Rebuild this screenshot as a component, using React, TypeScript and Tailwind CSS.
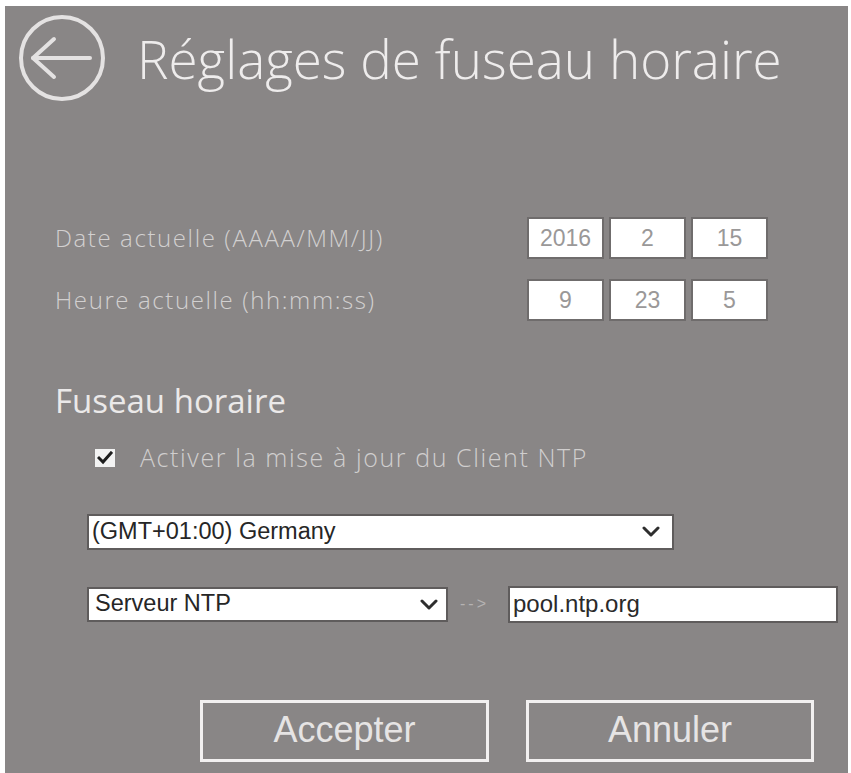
const segoe = "font-['Open_Sans','Noto_Sans',sans-serif]";
const arial = "font-['Liberation_Sans',Arial,sans-serif]";

function BackIcon() {
  return (
    <svg width="90" height="90" viewBox="0 0 90 90" fill="none" stroke="#e4e2e2" strokeWidth="4" strokeLinecap="round" strokeLinejoin="round">
      <circle cx="45" cy="45" r="41" />
      <path d="M16 45 H73" />
      <path d="M37 26 L16 45 L37 64" />
    </svg>
  );
}

function Chevron() {
  return (
    <svg width="18" height="11" viewBox="0 0 18 11" fill="none" stroke="#2e2e2e" strokeWidth="3" strokeLinecap="round" strokeLinejoin="round">
      <path d="M2 2 L9 9 L16 2" />
    </svg>
  );
}

function NumBox({ value }: { value: string }) {
  return (
    <div className={`w-[77px] h-full bg-white border-2 border-[#6f6c6c] flex items-center justify-center text-[23px] text-[#9a9898] ${arial}`}>
      {value}
    </div>
  );
}

function FieldRow({ label, values }: { label: string; values: string[] }) {
  return (
    <div className="flex items-center h-[42px]">
      <div className={`w-[472px] text-[24px] font-light tracking-[1.6px] text-[#d2d0d0] ${segoe}`}>{label}</div>
      <div className="flex gap-[5px] h-full">
        {values.map((v, i) => (
          <NumBox key={i} value={v} />
        ))}
      </div>
    </div>
  );
}

export default function App() {
  return (
    <div className="w-[851px] h-[773px] bg-white pl-[5px] pt-[6px] pr-[3px]">
      <div className="h-full bg-[#898686] flex flex-col">
        <div className="flex items-center pl-[12px] pt-[7px]">
          <BackIcon />
          <h1 className={`ml-[30px] text-[53px] font-light leading-none text-[#eeecec] ${segoe}`}>
            Réglages de fuseau horaire
          </h1>
        </div>

        <div className="mt-[114px] pl-[50px] flex flex-col gap-[20px]">
          <FieldRow label="Date actuelle (AAAA/MM/JJ)" values={["2016", "2", "15"]} />
          <FieldRow label="Heure actuelle (hh:mm:ss)" values={["9", "23", "5"]} />
        </div>

        <h2 className={`mt-[63px] pl-[50px] text-[33px] leading-none text-[#ebe9e9] ${segoe}`}>Fuseau horaire</h2>

        <label className="mt-[22px] ml-[90px] flex items-center gap-[25px]">
          <span className="w-[20px] h-[18px] bg-[#f3f3f3] flex items-center justify-center">
            <svg width="16" height="14" viewBox="0 0 16 14" fill="none" stroke="#1e1e1e" strokeWidth="3" strokeLinecap="square">
              <path d="M2 7 L6 11 L14 2" />
            </svg>
          </span>
          <span className={`text-[25px] font-light tracking-[1.6px] text-[#d0cece] ${segoe}`}>Activer la mise à jour du Client NTP</span>
        </label>

        <div className="mt-[37px] ml-[82px] w-[587px] h-[36px] bg-white border-2 border-[#5f5c5c] flex items-center justify-between pl-[3px] pr-[12px]">
          <span className={`text-[23.5px] text-[#262626] ${arial}`}>(GMT+01:00) Germany</span>
          <Chevron />
        </div>

        <div className="mt-[36px] ml-[82px] flex items-center">
          <div className="w-[361px] h-[35px] bg-white border-2 border-[#5f5c5c] flex items-center justify-between pl-[6px] pr-[8px]">
            <span className={`text-[23.5px] text-[#262626] ${arial}`}>Serveur NTP</span>
            <Chevron />
          </div>
          <span className={`ml-[12px] w-[48px] text-[16px] text-[#b5b3b3] tracking-[3px] ${arial}`}>--&gt;</span>
          <div className="w-[330px] h-[37px] bg-white border-2 border-[#5f5c5c] flex items-center pl-[3px]">
            <span className={`text-[24px] text-[#2a2a2a] ${arial}`}>pool.ntp.org</span>
          </div>
        </div>

        <div className="mt-[77px] ml-[195px] flex gap-[37px]">
          <button className={`w-[289px] h-[62px] border-[3px] border-[#f2f0f0] pb-[4px] text-[36px] text-[#e6e4e4] ${arial}`}>Accepter</button>
          <button className={`w-[288px] h-[62px] border-[3px] border-[#f2f0f0] pb-[4px] text-[36px] text-[#e6e4e4] ${arial}`}>Annuler</button>
        </div>
      </div>
    </div>
  );
}
